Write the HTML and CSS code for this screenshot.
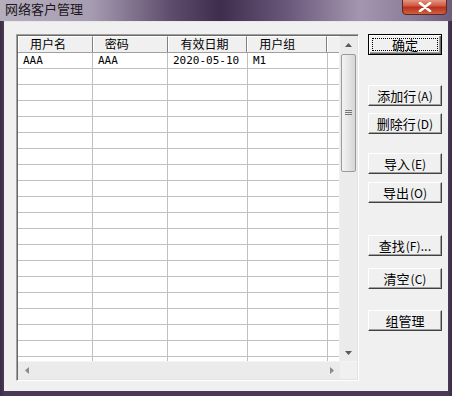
FILE: index.html
```html
<html>
<head>
<meta charset="utf-8">
<link rel="stylesheet" href="styles.css">
</head>
<body>

<div class="window">
    <div class="titlebar">
        <span class="title">网络客户管理</span>
        <span class="close-btn">
            <svg width="14" height="10" viewBox="0 0 14 10"><path d="M2 1 L12 9 M12 1 L2 9" stroke="#fff" stroke-width="2.6" stroke-linecap="round"/></svg>
        </span>
    </div>

    <div class="client">
        <div class="listview">
            <div class="list-main">
                <div class="grid">
                    <div class="row header">
                        <div class="cell c1">用户名</div>
                        <div class="cell c2">密码</div>
                        <div class="cell c3">有效日期</div>
                        <div class="cell c4">用户组</div>
                        <div class="cell c5"></div>
                    </div>
                    <div class="row"><div class="cell c1 mono">AAA</div><div class="cell c2 mono">AAA</div><div class="cell c3 mono">2020-05-10</div><div class="cell c4 mono">M1</div><div class="cell c5"></div></div>
                    <div class="row"><div class="cell c1"></div><div class="cell c2"></div><div class="cell c3"></div><div class="cell c4"></div><div class="cell c5"></div></div>
                    <div class="row"><div class="cell c1"></div><div class="cell c2"></div><div class="cell c3"></div><div class="cell c4"></div><div class="cell c5"></div></div>
                    <div class="row"><div class="cell c1"></div><div class="cell c2"></div><div class="cell c3"></div><div class="cell c4"></div><div class="cell c5"></div></div>
                    <div class="row"><div class="cell c1"></div><div class="cell c2"></div><div class="cell c3"></div><div class="cell c4"></div><div class="cell c5"></div></div>
                    <div class="row"><div class="cell c1"></div><div class="cell c2"></div><div class="cell c3"></div><div class="cell c4"></div><div class="cell c5"></div></div>
                    <div class="row"><div class="cell c1"></div><div class="cell c2"></div><div class="cell c3"></div><div class="cell c4"></div><div class="cell c5"></div></div>
                    <div class="row"><div class="cell c1"></div><div class="cell c2"></div><div class="cell c3"></div><div class="cell c4"></div><div class="cell c5"></div></div>
                    <div class="row"><div class="cell c1"></div><div class="cell c2"></div><div class="cell c3"></div><div class="cell c4"></div><div class="cell c5"></div></div>
                    <div class="row"><div class="cell c1"></div><div class="cell c2"></div><div class="cell c3"></div><div class="cell c4"></div><div class="cell c5"></div></div>
                    <div class="row"><div class="cell c1"></div><div class="cell c2"></div><div class="cell c3"></div><div class="cell c4"></div><div class="cell c5"></div></div>
                    <div class="row"><div class="cell c1"></div><div class="cell c2"></div><div class="cell c3"></div><div class="cell c4"></div><div class="cell c5"></div></div>
                    <div class="row"><div class="cell c1"></div><div class="cell c2"></div><div class="cell c3"></div><div class="cell c4"></div><div class="cell c5"></div></div>
                    <div class="row"><div class="cell c1"></div><div class="cell c2"></div><div class="cell c3"></div><div class="cell c4"></div><div class="cell c5"></div></div>
                    <div class="row"><div class="cell c1"></div><div class="cell c2"></div><div class="cell c3"></div><div class="cell c4"></div><div class="cell c5"></div></div>
                    <div class="row"><div class="cell c1"></div><div class="cell c2"></div><div class="cell c3"></div><div class="cell c4"></div><div class="cell c5"></div></div>
                    <div class="row"><div class="cell c1"></div><div class="cell c2"></div><div class="cell c3"></div><div class="cell c4"></div><div class="cell c5"></div></div>
                    <div class="row"><div class="cell c1"></div><div class="cell c2"></div><div class="cell c3"></div><div class="cell c4"></div><div class="cell c5"></div></div>
                    <div class="row"><div class="cell c1"></div><div class="cell c2"></div><div class="cell c3"></div><div class="cell c4"></div><div class="cell c5"></div></div>
                    <div class="row"><div class="cell c1"></div><div class="cell c2"></div><div class="cell c3"></div><div class="cell c4"></div><div class="cell c5"></div></div>
                    <div class="row"><div class="cell c1"></div><div class="cell c2"></div><div class="cell c3"></div><div class="cell c4"></div><div class="cell c5"></div></div>
                </div>
                <div class="vscroll">
                    <div class="sb-btn"><svg width="7" height="4" viewBox="0 0 7 4"><path d="M0 4 L3.5 0 L7 4 Z" fill="#5a5a5a"/></svg></div>
                    <div class="sb-thumb">
                        <svg width="7" height="6" viewBox="0 0 7 6"><path d="M0 0.5 H7 M0 2.5 H7 M0 4.5 H7" stroke="#777" stroke-width="1"/></svg>
                    </div>
                    <div class="sb-track"></div>
                    <div class="sb-btn"><svg width="7" height="4" viewBox="0 0 7 4"><path d="M0 0 L3.5 4 L7 0 Z" fill="#5a5a5a"/></svg></div>
                </div>
            </div>
            <div class="hscroll">
                <div class="sb-btn"><svg width="4" height="7" viewBox="0 0 4 7"><path d="M4 0 L0 3.5 L4 7 Z" fill="#8a8a8a"/></svg></div>
                <div class="sb-track"></div>
                <div class="sb-btn"><svg width="4" height="7" viewBox="0 0 4 7"><path d="M0 0 L4 3.5 L0 7 Z" fill="#8a8a8a"/></svg></div>
                <div class="sb-corner"></div>
            </div>
        </div>

        <div class="buttons">
            <div class="btn default b-ok"><span class="focus">确定</span></div>
            <div class="btn b-add">添加行 <span class="hk">(A)</span></div>
            <div class="btn b-del">删除行 <span class="hk">(D)</span></div>
            <div class="btn b-imp">导入 <span class="hk">(E)</span></div>
            <div class="btn b-exp">导出 <span class="hk">(O)</span></div>
            <div class="btn b-find">查找 <span class="hk">(F)</span>...</div>
            <div class="btn b-clr">清空 <span class="hk">(C)</span></div>
            <div class="btn b-grp">组管理</div>
        </div>
    </div>
</div>

</body>
</html>
```

FILE: styles.css
```css
body {
    margin: 0;
    width: 452px;
    height: 396px;
    overflow: hidden;
    background-color: #2a2033;
    font-family: "Noto Sans CJK SC", "DejaVu Sans", sans-serif;
    font-size: 12px;
    color: #000;
}

.window {
    display: flex;
    flex-direction: column;
    height: 396px;
    background: linear-gradient(to right, #3a2c44 0px, #4a3a56 4px, #4a3a56 448px, #3a2c44 452px);
}

.titlebar {
    height: 21px;
    display: flex;
    align-items: flex-start;
    background: linear-gradient(to right, #b5aebd 0px, #a79db2 90px, #5f4d6e 170px, #3e2d4d 220px, #6c5a7c 290px, #a496b0 360px, #8c7d99 410px, #6d5d7b 452px);
}

.title {
    padding: 1px 0 0 5px;
    font-size: 13px;
    line-height: 15px;
    color: #1c1620;
}

.close-btn {
    margin-left: auto;
    margin-right: 5px;
    margin-top: -2px;
    width: 43px;
    height: 15px;
    display: flex;
    align-items: center;
    justify-content: center;
    border: 1px solid #5a2a22;
    border-radius: 0 0 4px 4px;
    background: linear-gradient(to bottom, #e7a08f 0%, #cf5a42 45%, #b8301a 55%, #d06040 100%);
}

.client {
    flex: 1;
    margin: 0 4px 5px 4px;
    background-color: #f0f0f0;
    border-top: 1px solid #e8e8e8;
    display: flex;
    padding: 12px 6px 0 12px;
}

/* list view */
.listview {
    width: 339px;
    height: 343px;
    border-top: 1px solid #a0a0a0;
    border-left: 1px solid #a0a0a0;
    border-right: 1px solid #fff;
    border-bottom: 1px solid #fff;
    box-shadow: inset 1px 1px 0 #696969, inset -1px -1px 0 #e3e3e3;
    padding: 1px;
    display: flex;
    flex-direction: column;
    background-color: #fff;
}

.list-main {
    flex: 1;
    display: flex;
    overflow: hidden;
}

.grid {
    flex: 1;
    overflow: hidden;
}

.row {
    display: flex;
    height: 15px;
    border-bottom: 1px solid #c0c0c0;
}

.cell {
    border-right: 1px solid #c0c0c0;
    line-height: 15px;
    padding-left: 5px;
    white-space: nowrap;
    overflow: hidden;
    box-sizing: border-box;
}

.c1 { width: 75px; }
.c2 { width: 75px; }
.c3 { width: 80px; }
.c4 { width: 80px; }
.c5 { flex: 1; border-right: none; }

.mono {
    font-family: "DejaVu Sans Mono", monospace;
    font-size: 11px;
}

.row.header {
    height: 16px;
    background-color: #f0f0f0;
    border-bottom: 1px solid #a0a0a0;
}

.row.header .cell {
    padding-left: 11px;
    line-height: 14px;
    font-size: 12px;
    border-right: 1px solid #808080;
    border-left: 1px solid #fff;
    border-top: 1px solid #fff;
}

.row.header .c3 {
    padding-left: 12px;
}

.row.header .c5 {
    border-right: none;
}

/* scrollbars */
.vscroll {
    width: 17px;
    display: flex;
    flex-direction: column;
    background-color: #ebebeb;
    border-left: 1px solid #f0f0f0;
}

.sb-btn {
    width: 17px;
    height: 17px;
    display: flex;
    align-items: center;
    justify-content: center;
    flex-shrink: 0;
}

.sb-thumb {
    height: 118px;
    margin: 1px 0 0 1px;
    width: 15px;
    border: 1px solid #9a9a9a;
    border-radius: 2px;
    box-sizing: border-box;
    background: linear-gradient(to right, #f4f4f4, #e2e2e2 60%, #d6d6d6);
    display: flex;
    align-items: center;
    justify-content: center;
}

.sb-track {
    flex: 1;
}

.hscroll {
    height: 17px;
    display: flex;
    background-color: #ebebeb;
    border-top: 1px solid #f4f4f4;
}

.sb-corner {
    width: 17px;
    background-color: #f0f0f0;
}

/* buttons */
.buttons {
    display: flex;
    flex-direction: column;
    margin-left: 9px;
    width: 74px;
}

.btn {
    height: 21px;
    box-sizing: border-box;
    background-color: #f0f0f0;
    border-top: 1px solid #fff;
    border-left: 1px solid #fff;
    border-right: 1px solid #404040;
    border-bottom: 1px solid #404040;
    box-shadow: inset -1px -1px 0 #a0a0a0;
    display: flex;
    align-items: center;
    justify-content: center;
    font-size: 13px;
    line-height: 19px;
    white-space: nowrap;
}

.btn .hk {
    font-size: 12px;
    margin-left: 1px;
}

.btn.default {
    border: 1px solid #000;
    box-shadow: inset 1px 1px 0 #fff, inset -1px -1px 0 #696969, inset -2px -2px 0 #a0a0a0;
    padding: 3px;
}

.btn .focus {
    flex: 1;
    align-self: stretch;
    border: 1px dotted #000;
    display: flex;
    align-items: center;
    justify-content: center;
    line-height: 11px;
}

.b-ok { margin-top: 0; }
.b-add { margin-top: 30px; }
.b-del { margin-top: 7px; }
.b-imp { margin-top: 19px; }
.b-exp { margin-top: 8px; }
.b-find { margin-top: 32px; }
.b-clr { margin-top: 12px; }
.b-grp { margin-top: 21px; }
```
